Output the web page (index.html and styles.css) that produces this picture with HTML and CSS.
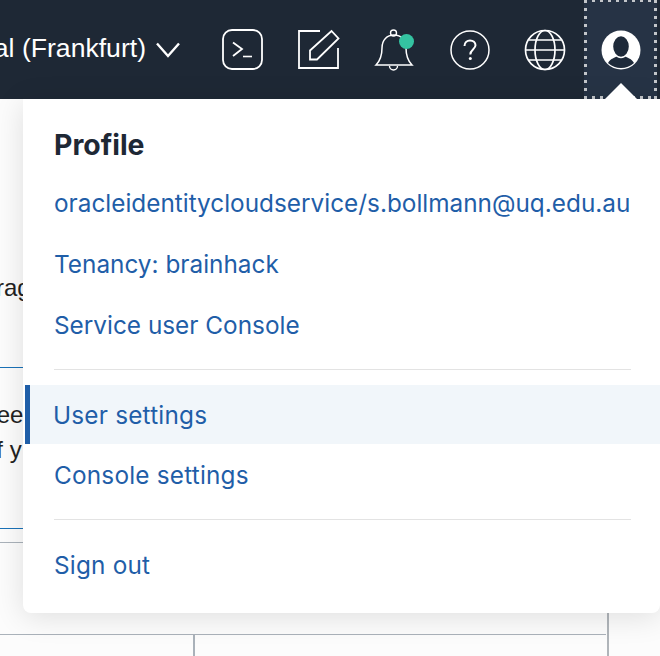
FILE: index.html
```html
<!DOCTYPE html>
<html lang="en">
<head>
<meta charset="utf-8">
<title>Profile menu</title>
<link rel="stylesheet" href="styles.css">
</head>
<body>
<div class="page">
  <header class="topbar">
    <button class="region"><span class="region-name">Germany Central (Frankfurt)</span>
      <svg class="chevron" width="26" height="16" viewBox="0 0 26 16"><path d="M2 1.500 L13 14 L24 1.500" fill="none" stroke="#fff" stroke-width="2.400"/></svg>
    </button>
    <div class="tools">
      <svg class="tool" width="42" height="42" viewBox="0 0 42 42"><rect x="1" y="1" width="39" height="39" rx="9" fill="none" stroke="#fff" stroke-width="1.800"/><path d="M11 13.500 L20 20 L11 27" fill="none" stroke="#fff" stroke-width="1.800"/><path d="M21 27.500 H30" fill="none" stroke="#fff" stroke-width="1.600"/></svg>
      <svg class="tool" width="42" height="42" viewBox="0 0 42 42"><path d="M22 2 H1 V39 H40 V19" fill="none" stroke="#fff" stroke-width="1.800"/><path d="M12 21.500 L33.500 2 L40.500 9.500 L19 30.500 H12 Z" fill="none" stroke="#fff" stroke-width="1.800"/></svg>
      <svg class="tool" width="42" height="42" viewBox="0 0 42 42"><path d="M2 36 C7 31 8 25 8 19 C8 11 13 6 20 6 C27 6 32 11 32 19 C32 25 33 31 38 36 Z" fill="none" stroke="#fff" stroke-width="1.500"/><circle cx="19.500" cy="4" r="3" fill="none" stroke="#fff" stroke-width="1.400"/><path d="M15.500 37 A4 4 0 0 0 23.500 37" fill="none" stroke="#fff" stroke-width="1.400"/><circle cx="32.500" cy="12.500" r="7.500" fill="#34c3a1"/></svg>
      <svg class="tool" width="40" height="40" viewBox="0 0 40 40"><circle cx="20" cy="20" r="19" fill="none" stroke="#fff" stroke-width="1.500"/><path d="M14.500 16 C14.500 12.500 17 10.500 20 10.500 C23.200 10.500 25.500 12.500 25.500 15.300 C25.500 19 20.300 19.500 20.300 24.500" fill="none" stroke="#fff" stroke-width="2"/><circle cx="20.300" cy="28.500" r="1.500" fill="#fff"/></svg>
      <svg class="tool" width="42" height="42" viewBox="0 0 42 42"><g fill="none" stroke="#fff" stroke-width="1.700"><circle cx="21" cy="21" r="19.500"/><ellipse cx="21" cy="21" rx="10" ry="19.500"/><path d="M1.500 21 H40.500 M4.500 11 H37.500 M4.500 31 H37.500"/></g></svg>
      <div class="avatar-box">
        <svg width="40" height="40" viewBox="0 0 40 40"><circle cx="20" cy="20" r="19.500" fill="#fff"/><path d="M7 33 C10 28 14 28 16 26 C18 28 22 28 24 26 C26 28 30 28 33 33 C29 36.500 25 38 20 38 C15 38 11 36.500 7 33 Z" fill="#1e2a3a"/><ellipse cx="20" cy="16.500" rx="8.500" ry="11" fill="#1e2a3a" stroke="#fff" stroke-width="1.400"/></svg>
      </div>
    </div>
  </header>
  <main class="content">
    <p class="frag frag-one">Storage</p>
    <div class="rule-blue"></div>
    <p class="frag frag-two">free</p>
    <p class="frag frag-three">of y</p>
    <div class="rule-blue rule-low"></div>
    <div class="lower">
      <div class="rule-grey"></div>
      <div class="table-row"><div class="cell-a"></div></div>
    </div>
  </main>
  <nav class="menu">
    <span class="caret"></span>
    <h2 class="menu-title">Profile</h2>
    <a class="item item-first">oracleidentitycloudservice/s.bollmann@uq.edu.au</a>
    <a class="item">Tenancy: brainhack</a>
    <a class="item item-last">Service user Console</a>
    <hr class="sep">
    <a class="item item-row active">User settings</a>
    <a class="item item-row item-next">Console settings</a>
    <hr class="sep">
    <a class="item item-row">Sign out</a>
  </nav>
</div>
</body>
</html>
```
FILE: styles.css
```css
* { box-sizing: border-box; }
html, body { margin: 0; height: 100%; }
body { font-family: Inter, "Liberation Sans", sans-serif; overflow: hidden; background: #fcfcfc; }
.page { position: relative; width: 660px; height: 656px; overflow: hidden; }

.topbar { height: 99px; background: #1e2835; display: flex; justify-content: flex-end; align-items: center; overflow: hidden; }
.region { flex: none; display: flex; align-items: center; gap: 9px; background: none; border: 0; padding: 0; color: #fff; font: 26.6px "Liberation Sans", sans-serif; white-space: nowrap; margin-right: 41px; }
.region-name { display: block; padding-bottom: 2px; }
.chevron { display: block; }
.tools { flex: none; display: flex; align-items: center; height: 99px; gap: 34px; }
.tool { display: block; flex: none; }
.avatar-box {
  width: 73px; height: 99px; margin-left: -16px; margin-right: 3px;
  display: flex; align-items: center; justify-content: center;
  background:
    repeating-linear-gradient(90deg, #c3c6ca 0 3px, transparent 3px 8px) left top / 100% 2px no-repeat,
    repeating-linear-gradient(90deg, #c3c6ca 0 3px, transparent 3px 8px) left bottom / 100% 3px no-repeat,
    repeating-linear-gradient(180deg, #c3c6ca 0 3px, transparent 3px 8px) left top / 3px 100% no-repeat,
    repeating-linear-gradient(180deg, #c3c6ca 0 3px, transparent 3px 8px) right top / 3px 100% no-repeat,
    #263345;
}

.content { height: 557px; padding-top: 171px; }
.frag { margin: 0; font: 24px/35px "Liberation Sans", sans-serif; color: #222; white-space: nowrap; }
.frag-one { margin-left: -40px; }
.rule-blue { height: 1px; background: #1a72b8; margin-top: 62px; }
.frag-two { margin-top: 29px; margin-left: -18px; }
.frag-three { margin-left: -17px; }
.rule-low { margin-top: 61px; }
.lower { width: 609px; height: 114px; padding-right: 1px; margin-top: 13px; border-right: 2px solid #b0b5ba; }
.rule-grey { height: 1px; background: #aab2ba; }
.table-row { margin-top: 91px; height: 22px; border-top: 1px solid #aab2ba; }
.cell-a { width: 195px; height: 100%; border-right: 2px solid #aab2ba; }

.menu { position: absolute; left: 23px; top: 99px; width: 637px; height: 514px; background: #fff; border-radius: 0 0 8px 8px; box-shadow: 0 4px 30px rgba(0,0,0,.12); padding-top: 30px; }
.caret { position: absolute; left: 582px; top: -16px; width: 0; height: 0; border-left: 16px solid transparent; border-right: 16px solid transparent; border-bottom: 16px solid #fff; }
.menu-title { margin: 0 0 0 31px; font-size: 28.4px; line-height: 32px; font-weight: 700; color: #1e2835; }
.item { display: block; color: #1f5ea8; font-size: 24.35px; line-height: 30px; padding-left: 31px; white-space: nowrap; margin-top: 31px; }
.item-first { margin-top: 27px; }
.item-last { margin-bottom: 29px; }
.item-row { height: 59px; line-height: 60px; margin: 0; letter-spacing: .2px; }
.item-next { margin-top: 1px; }
.active { margin-left: 2px; padding-left: 23px; border-left: 5px solid #1f5ea8; background: #f1f6fa; }
.sep { height: 1px; margin: 15px 0 15px 31px; width: 577px; background: #e3e3e3; border: 0; }
```
